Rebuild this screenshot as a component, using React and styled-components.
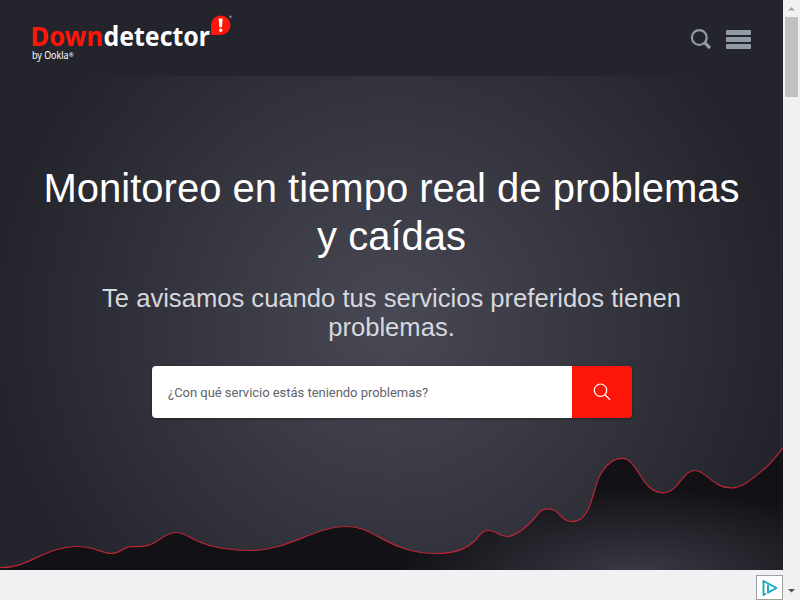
import React from "react";
import styled, { createGlobalStyle } from "styled-components";

const wave =
  "M0 119.5 C30 120.5 42 99 78 98.5 C94 98.5 102 105.5 112 105.5 C120 105.5 123 99 131 98.7 C139 98 145 100 154 95 C162 90 168 84.5 176 84.5 C185 84.5 189 90 202 95 C217 100.500 233 102.500 251 102.500 C289 102.500 314 78.500 347 78.500 C376 78.500 388 105.500 437 105.500 C457 105.500 469 99 476 91.500 C482 85 482 82.500 489 82.500 C497 82.500 499 88.500 507 88.500 C515 88.500 525 80 532 73 C539 66 539 61 548 60.800 C560 60.500 560 73.500 572 73.700 C579 73.500 586 68 590 57 C594 46 597 31 602 24 C608 14.500 614 10.300 622 10.300 C638 10.300 641 44.500 663 44.800 C679 44.500 682 22.500 695 22.500 C706 22.500 713 40 731 40 C743 39.500 752 31 763 22 C772 15 777 7 783 0";

function App() {
  return (
    <Page>
      <GlobalStyle />
      <Main>
        <Header>
          <Logo viewBox="0 0 204 50">
            <text x="-1.500" y="32" fontSize="26.500" fontWeight="700" fill="#ff160a" textLength="72.500" lengthAdjust="spacingAndGlyphs">
              Down
            </text>
            <text x="71.500" y="32" fontSize="26.500" fontWeight="700" fill="#fff" textLength="106.500" lengthAdjust="spacingAndGlyphs">
              detector
            </text>
            <path d="M179 21 V11 A9.700 9.700 0 1 1 188.700 21 Z" fill="#ff160a" />
            <path d="M186.700 4.500 H190.600 L190 13.200 H187.300 Z" fill="#fff" />
            <circle cx="188.700" cy="16.300" r="1.700" fill="#fff" />
            <circle cx="198.500" cy="2.800" r="1.200" fill="#85868c" />
            <text x="0" y="45" fontSize="10" fill="#fff" textLength="36.500" lengthAdjust="spacingAndGlyphs">
              by Ookla
            </text>
            <text x="36.800" y="43" fontSize="6" fill="#fff">
              ®
            </text>
          </Logo>
          <Actions>
            <HeaderSearch viewBox="0 0 22 22">
              <circle cx="9.300" cy="8.500" r="7.400" fill="none" stroke="#919ba5" strokeWidth="2.200" />
              <path d="M14.500 13.500 L20 19" stroke="#919ba5" strokeWidth="3.200" />
            </HeaderSearch>
            <Menu>
              <MenuBar />
              <MenuBar />
              <MenuBar />
            </Menu>
          </Actions>
        </Header>

        <Hero>
          <Title>Monitoreo en tiempo real de problemas y caídas</Title>
          <Subtitle>Te avisamos cuando tus servicios preferidos tienen problemas.</Subtitle>
          <SearchForm>
            <SearchInput placeholder="¿Con qué servicio estás teniendo problemas?" />
            <SearchButton type="button">
              <SearchIcon viewBox="0 0 18 18">
                <circle cx="7.500" cy="7.200" r="6.200" fill="none" stroke="#fff" strokeWidth="1.200" />
                <path d="M12 11.700 L17 16.700" stroke="#fff" strokeWidth="1.300" />
              </SearchIcon>
            </SearchButton>
          </SearchForm>
          <Wave viewBox="0 0 783 122">
            <defs>
              <radialGradient id="glow" gradientUnits="userSpaceOnUse" cx="0" cy="0" r="1" gradientTransform="translate(635 128) scale(235 88)">
                <stop offset="0" stopColor="#3b3b47" />
                <stop offset="1" stopColor="#121216" />
              </radialGradient>
            </defs>
            <path d={`${wave} V122 H0 Z`} fill="url(#glow)" />
            <path d={wave} fill="none" stroke="#bd2434" strokeWidth="1.200" />
          </Wave>
        </Hero>

        <AdBar>
          <AdChoices>
            <svg width="18" height="18" viewBox="0 0 18 18" fill="none" stroke="#18aabd" strokeWidth="1.900" strokeLinejoin="round">
              <path d="M5 14.500 L2.500 16 V2 L15.500 9 L7 13.700 V6.500" />
              <path d="M7 5.500 V7" strokeWidth="1.400" />
            </svg>
          </AdChoices>
        </AdBar>
      </Main>

      <Scrollbar>
        <Arrow viewBox="0 0 17 17">
          <path d="M5 10.500 L8.500 7 L12 10.500 Z" fill="#a3a3a3" />
        </Arrow>
        <Thumb />
        <Arrow viewBox="0 0 17 17">
          <path d="M5 6 L8.500 9.500 L12 6 Z" fill="#505050" />
        </Arrow>
      </Scrollbar>
    </Page>
  );
}

const GlobalStyle = createGlobalStyle`
  * {
    box-sizing: border-box;
  }
  body {
    margin: 0;
    overflow: hidden;
    font-family: "Liberation Sans", Arial, sans-serif;
  }
`;

const Page = styled.div`
  display: flex;
  width: 800px;
  height: 600px;
`;

const Main = styled.div`
  width: 783px;
  display: flex;
  flex-direction: column;
`;

const Header = styled.header`
  height: 76px;
  padding: 14px 32px 0;
  display: flex;
  justify-content: space-between;
  background: #24242c;
`;

const Logo = styled.svg`
  width: 204px;
  height: 50px;
  overflow: visible;
  font-family: "Noto Sans", "Open Sans", sans-serif;
`;

const Actions = styled.div`
  display: flex;
  gap: 14px;
  padding-top: 15px;
`;

const HeaderSearch = styled.svg`
  width: 22px;
  height: 22px;
`;

const Menu = styled.div`
  width: 25px;
  padding-top: 1px;
  display: flex;
  flex-direction: column;
  gap: 2px;
`;

const MenuBar = styled.span`
  height: 5px;
  border-radius: 1px;
  background: #919ba5;
`;

const Hero = styled.section`
  height: 494px;
  padding-top: 88px;
  display: flex;
  flex-direction: column;
  align-items: center;
  text-align: center;
  background: radial-gradient(circle 391px at 50% 50%, #494955, #24242c);
`;

const Title = styled.h1`
  width: 720px;
  margin: 0 0 24px;
  font-size: 40px;
  line-height: 48px;
  font-weight: 400;
  color: #fff;
`;

const Subtitle = styled.h2`
  width: 620px;
  margin: 0 0 24px;
  font-size: 25.6px;
  line-height: 29px;
  font-weight: 400;
  color: #d5d8df;
`;

const SearchForm = styled.form`
  width: 480px;
  height: 52px;
  flex-shrink: 0;
  margin-left: 1px;
  display: flex;
  border-radius: 4px;
  overflow: hidden;
  box-shadow: 0 1px 3px rgba(0, 0, 0, 0.35);
`;

const SearchInput = styled.input`
  width: 420px;
  padding: 0 16px;
  border: 0;
  outline: 0;
  background: #fff;
  font-family: Roboto, sans-serif;
  font-size: 13px;
  letter-spacing: -0.03px;
  &::placeholder {
    color: #62636a;
  }
`;

const SearchButton = styled.button`
  width: 60px;
  padding: 0;
  border: 0;
  display: flex;
  align-items: center;
  justify-content: center;
  background: #ff160a;
`;

const SearchIcon = styled.svg`
  width: 18px;
  height: 18px;
`;

const Wave = styled.svg`
  width: 783px;
  height: 122px;
  flex-shrink: 0;
  margin-top: auto;
`;

const AdBar = styled.div`
  height: 30px;
  padding-top: 5px;
  display: flex;
  justify-content: flex-end;
  background: #f0f1f3;
`;

const AdChoices = styled.div`
  width: 27px;
  height: 25px;
  display: flex;
  align-items: center;
  justify-content: center;
  border: 1px solid #a0a0a0;
  background: #fff;
`;

const Scrollbar = styled.div`
  width: 17px;
  display: flex;
  flex-direction: column;
  align-items: center;
  background: #f1f1f1;
`;

const Arrow = styled.svg`
  width: 17px;
  height: 17px;
`;

const Thumb = styled.div`
  width: 13px;
  height: 80px;
  margin-bottom: auto;
  background: #c1c1c1;
`;

export default App;
